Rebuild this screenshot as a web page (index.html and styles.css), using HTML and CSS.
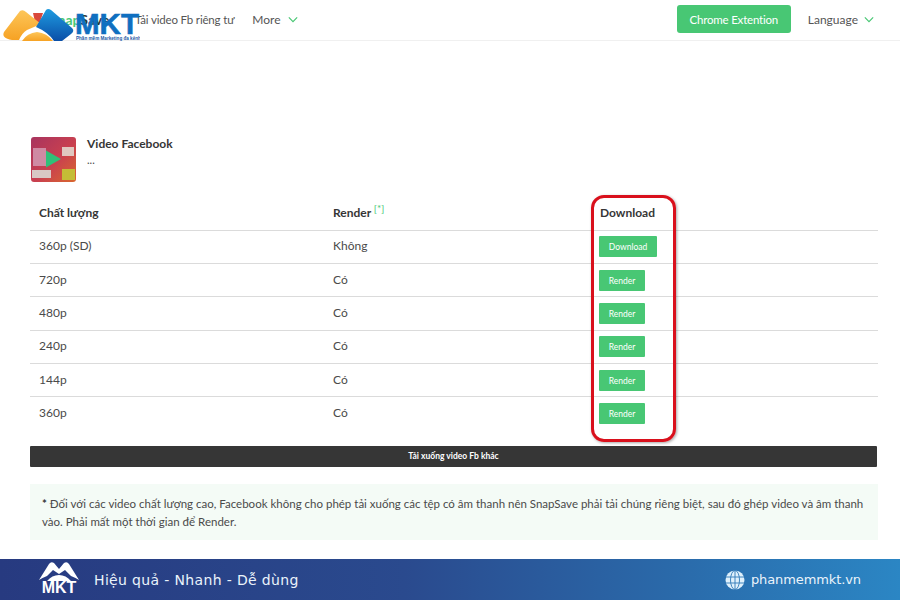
FILE: index.html
```html
<!DOCTYPE html>
<html lang="vi">
<head>
<meta charset="utf-8">
<title>Video Facebook</title>
<link rel="stylesheet" href="styles.css">
</head>
<body>
<div class="page">
  <header class="nav">
    <div class="nav-left">
      <span class="brand"><span class="brand-a">Snap</span>Save</span>
      <span class="nav-link tight">Tải video Fb riêng tư</span>
      <span class="nav-link more">More
        <svg class="chev" viewBox="0 0 12 8"><path d="M1 1.5 6 6.5 11 1.5"/></svg>
      </span>
    </div>
    <div class="nav-right">
      <span class="chrome-btn">Chrome Extention</span>
      <span class="nav-link lang">Language
        <svg class="chev" viewBox="0 0 12 8"><path d="M1 1.5 6 6.5 11 1.5"/></svg>
      </span>
    </div>
  </header>

  <svg class="logo" viewBox="0 0 140 42">
    <defs>
      <linearGradient id="og" x1="0" y1="0" x2="0" y2="1"><stop offset="0" stop-color="#fdc659"/><stop offset="1" stop-color="#f6a224"/></linearGradient>
      <linearGradient id="bg" x1="0" y1="0" x2="0" y2="1"><stop offset="0" stop-color="#1f9be0"/><stop offset="1" stop-color="#0a4fa8"/></linearGradient>
    </defs>
    <path d="M33 13H43L40 22H35Z" fill="#d9483b"/>
    <path d="M4 32 L20 11 Q23 9 26 12 L41 24 L27 30 Q22 33 19 40 L12 40 Q1 38 4 32Z" fill="url(#og)"/>
    <path d="M22 41 Q27 33 37 32 Q47 33 53 41Z" fill="url(#og)"/>
    <path d="M36 27 L46 10 Q48 8 51 10 L72 28 Q75 31 71 34 L62 41 L54 41 Q48 32 36 27Z" fill="url(#bg)"/>
    <text class="logo-mkt" x="75" y="34">MKT</text>
    <text class="logo-sub" x="76" y="40">Phần mềm Marketing đa kênh</text>
  </svg>

  <main class="main">
    <section class="video-head">
      <div class="thumb">
        <span class="thumb-a"></span>
        <span class="thumb-b"></span>
        <span class="thumb-c"></span>
        <span class="thumb-d"></span>
        <svg class="play" viewBox="0 0 16 18"><path d="M0 0 16 9 0 18Z"/></svg>
      </div>
      <div class="video-info">
        <div class="video-title">Video Facebook</div>
        <div class="video-sub">...</div>
      </div>
    </section>

    <table class="quality">
      <thead>
        <tr><th class="c1">Chất lượng</th><th class="c2">Render <sup class="star">[*]</sup></th><th class="c3">Download</th></tr>
      </thead>
      <tbody>
        <tr><td>360p (SD)</td><td>Không</td><td><span class="btn">Download</span></td></tr>
        <tr><td>720p</td><td>Có</td><td><span class="btn">Render</span></td></tr>
        <tr><td>480p</td><td>Có</td><td><span class="btn">Render</span></td></tr>
        <tr><td>240p</td><td>Có</td><td><span class="btn">Render</span></td></tr>
        <tr><td>144p</td><td>Có</td><td><span class="btn">Render</span></td></tr>
        <tr><td>360p</td><td>Có</td><td><span class="btn">Render</span></td></tr>
      </tbody>
    </table>

    <div class="other">Tải xuống video Fb khác</div>

    <p class="note"><b>*</b> Đối với các video chất lượng cao, Facebook không cho phép tải xuống các tệp có âm thanh nên SnapSave phải tải chúng riêng biệt, sau đó ghép video và âm thanh vào. Phải mất một thời gian để Render.</p>
  </main>

  <div class="highlight"></div>

  <footer class="banner">
    <div class="banner-left">
      <div class="mini-logo">
        <svg viewBox="0 0 42 20"><path d="M1 19 L11 3 Q13 0 16 2 L21 8 L26 2 Q29 0 31 3 L41 19 Q38 17 33 15 L27 9 L21 13 L15 9 L9 15 Q4 17 1 19Z M9 20 Q14 14 21 14 Q28 14 33 20Z" fill="#fff"/></svg>
        <span class="mini-mkt">MKT</span>
      </div>
      <span class="slogan">Hiệu quả - Nhanh - Dễ dùng</span>
    </div>
    <div class="banner-right">
      <svg class="globe" viewBox="0 0 20 20"><circle cx="10" cy="10" r="9.5" fill="#dff0fb"/><g fill="none" stroke="#2f79b8" stroke-width=".9"><ellipse cx="10" cy="10" rx="4.5" ry="9.5"/><path d="M10 .5V19.5M.8 7H19.2M.8 13H19.2"/></g></svg>
      <span class="site">phanmemmkt.vn</span>
    </div>
  </footer>
</div>
</body>
</html>
```

FILE: styles.css
```css
* { box-sizing: border-box; }
html, body { margin: 0; padding: 0; }
body { background: #fff; font-family: Lato, "Noto Sans", sans-serif; color: #4a4a4a; }
.page { position: relative; width: 900px; height: 600px; overflow: hidden; display: flex; flex-direction: column; }

.nav { height: 41px; flex: none; border-bottom: 1px solid #f0f0f0; display: flex; justify-content: space-between; align-items: center; padding: 0 26px 2px 50px; }
.nav-left, .nav-right { display: flex; align-items: center; }
.nav-link { font-size: 12px; color: #555; display: inline-flex; align-items: center; white-space: nowrap; }
.tight { font-size: 11.5px; letter-spacing: -.17px; }
.brand { width: 85px; font-size: 14px; font-weight: 700; color: #363636; }
.brand-a { color: #48c774; }
.more { margin-left: 18px; }
.chev { width: 10px; height: 7px; margin-left: 7px; fill: none; stroke: #48c774; stroke-width: 1.4; }
.chrome-btn { background: #48c774; color: #fff; font-size: 11.5px; letter-spacing: -.2px; height: 28px; width: 114px; border-radius: 3px; display: flex; align-items: center; justify-content: center; margin-right: 17px; }
.lang .chev { margin-left: 6px; }

.logo { position: absolute; left: 0; top: 0; width: 140px; height: 42px; }
.logo-mkt { font-family: "Liberation Sans", sans-serif; font-weight: 700; font-size: 29.5px; fill: #0f6fc0; stroke: #0f6fc0; stroke-width: .6px; }
.logo-sub { font-family: "Liberation Sans", sans-serif; font-size: 4.6px; font-weight: 700; fill: #1c5aa6; }

.main { flex: 1; padding: 96px 22px 0 30px; }
.video-head { display: flex; gap: 11px; height: 45px; }
.thumb { position: relative; margin-left: 1px; width: 45px; height: 45px; border-radius: 3px; overflow: hidden; background: linear-gradient(135deg, #a8345f 0%, #c9404f 55%, #d9682e 100%); }
.thumb-a { position: absolute; left: 2px; top: 11px; width: 13px; height: 18px; background: #cf8aa3; }
.thumb-b { position: absolute; left: 31px; top: 10px; width: 12px; height: 9px; background: #e0c8c0; }
.thumb-c { position: absolute; left: 31px; top: 32px; width: 13px; height: 11px; background: #c4bd36; }
.thumb-d { position: absolute; left: 1px; top: 33px; width: 19px; height: 8px; background: #d8c8c4; }
.play { position: absolute; left: 15px; top: 13px; width: 15px; height: 18px; fill: #2fc078; }
.video-info { padding-top: 0; }
.video-title { font-size: 12px; font-weight: 700; color: #363636; line-height: 14px; }
.video-sub { font-size: 11px; line-height: 14px; margin-top: 2px; color: #4a4a4a; }

.quality { width: 100%; border-collapse: collapse; margin-top: 15px; table-layout: fixed; font-size: 12px; }
.quality th { text-align: left; font-size: 12px; font-weight: 700; color: #363636; height: 33px; padding: 1px 0 2px 9px; border-bottom: 1px solid #dbdbdb; }
.quality td { height: 33.4px; padding: 0 0 2px 9px; border-bottom: 1px solid #dbdbdb; color: #4a4a4a; vertical-align: middle; }
.quality tr:last-child td { border-bottom: 0; }
.c1 { width: 294px; }
.c2 { width: 267px; }
.star { color: #48c774; font-weight: 400; font-size: 10px; line-height: 0; vertical-align: 5px; }
.btn { display: inline-block; background: #48c774; color: #fff; font-size: 8.5px; line-height: 22px; height: 21px; width: 46px; text-align: center; border-radius: 1px; margin: 2px 0 0 -1px; vertical-align: middle; }
tbody tr:first-child .btn { width: 58px; }

.other { margin-top: 16px; margin-right: 1px; height: 21px; background: #363636; color: #fff; font-size: 8.5px; font-weight: 700; line-height: 21px; text-align: center; border-radius: 1px; }
.note { margin: 17px 0 0; height: 56px; background: #f4fbf6; padding: 11px 12px; font-size: 11.5px; line-height: 17.5px; color: #4a4a4a; }
.note b { color: #363636; }

.highlight { position: absolute; left: 591px; top: 195px; width: 85px; height: 247px; border: 3px solid #d9101c; border-radius: 13px; box-shadow: 1px 1px 3px rgba(0,0,0,.35); }

.banner { flex: none; height: 41px; background: linear-gradient(90deg, #273a80 0%, #2a4a8e 45%, #2a6aaa 75%, #2b86c4 100%); display: flex; justify-content: space-between; align-items: center; padding: 0 39px 0 38px; color: #eaf3fb; }
.banner-left, .banner-right { display: flex; align-items: center; }
.mini-logo { width: 42px; display: flex; flex-direction: column; align-items: center; margin-top: -3px; }
.mini-logo svg { width: 42px; height: 20px; display: block; }
.mini-mkt { font-family: "Liberation Sans", sans-serif; font-weight: 700; font-size: 16px; line-height: 14px; color: #fff; }
.slogan { font-family: "DejaVu Sans", sans-serif; font-size: 14px; margin-left: 14px; letter-spacing: .35px; }
.globe { width: 20px; height: 20px; margin-right: 6px; }
.site { font-family: "DejaVu Sans", sans-serif; font-size: 13px; letter-spacing: -.1px; }
```
